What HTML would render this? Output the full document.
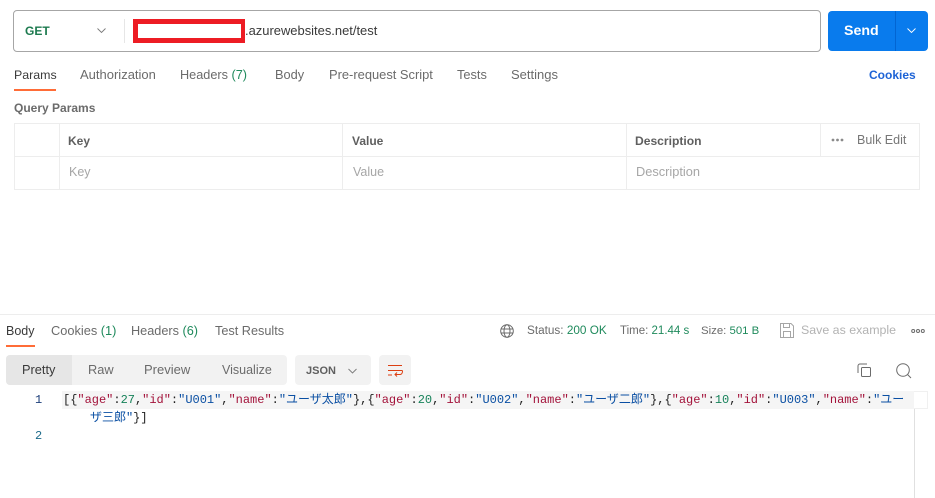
<!DOCTYPE html>
<html><head><meta charset="utf-8">
<style>
html,body{margin:0;padding:0;background:#fff}
body{width:935px;height:498px;position:relative;overflow:hidden;font-family:"Liberation Sans","Noto Sans CJK JP",sans-serif;font-size:12.8px;color:#6b6b6b}
.a{position:absolute}
.t{position:absolute;white-space:nowrap;line-height:16px}
.b{font-weight:bold}
.g{color:#1f8a5c}
.code{position:absolute;white-space:pre;font-family:"Liberation Mono","Noto Sans CJK JP",monospace;font-size:12px;line-height:18px;letter-spacing:-0.01px;color:#212121}
.k{color:#a3123a}.s{color:#0a4fa3}.n{color:#17825a}
svg{position:absolute;overflow:visible}
</style></head><body>

<!-- URL bar -->
<div class="a" style="left:13px;top:10px;width:806px;height:40px;border:1px solid #a6a6a6;border-radius:4px"></div>
<div class="t b" style="left:25px;top:23px;color:#1d7a4f;font-size:12px">GET</div>
<svg style="left:97px;top:27px" width="10" height="8"><path d="M0.5 1.5L4.5 5.5L8.5 1.5" fill="none" stroke="#7a7a7a" stroke-width="0.9"/></svg>
<div class="a" style="left:124px;top:19px;width:1px;height:24px;background:#e6e6e6"></div>
<div class="a" style="left:133px;top:19px;width:103px;height:14px;border:5px solid #ed1c24;border-right-width:4px;background:#fff"></div>
<div class="t" style="left:245px;top:23px;color:#3a3a3a;font-size:12.95px">.azurewebsites.net/test</div>

<!-- Send -->
<div class="a" style="left:828px;top:11px;width:100px;height:40px;background:#097bed;border-radius:4px"></div>
<div class="a" style="left:895px;top:11px;width:1px;height:40px;background:#0265d2"></div>
<div class="t b" style="left:844px;top:23px;color:#fff;font-size:14.2px">Send</div>
<svg style="left:907px;top:27px" width="10" height="8"><path d="M0.5 1.5L4.5 5.5L8.5 1.5" fill="none" stroke="#fff" stroke-width="0.9"/></svg>

<!-- Tabs -->
<div class="t" style="left:14px;top:67px;color:#3a3a3a;font-size:12.4px">Params</div>
<div class="a" style="left:14px;top:89px;width:42px;height:2px;background:#ff6c37"></div>
<div class="t" style="left:80px;top:67px;font-size:13px">Authorization</div>
<div class="t" style="left:180px;top:67px;font-size:12.7px">Headers <span class="g">(7)</span></div>
<div class="t" style="left:275px;top:67px">Body</div>
<div class="t" style="left:329px;top:67px;font-size:12.9px">Pre-request Script</div>
<div class="t" style="left:457px;top:67px">Tests</div>
<div class="t" style="left:511px;top:67px;font-size:13px">Settings</div>
<div class="t b" style="left:869px;top:67px;color:#1d63d6;font-size:12px">Cookies</div>
<div class="t b" style="left:14px;top:100px;font-size:12px">Query Params</div>

<!-- Table -->
<div class="a" style="left:14px;top:123px;width:904px;height:65px;border:1px solid #ededed"></div>
<div class="a" style="left:15px;top:156px;width:904px;height:1px;background:#ededed"></div>
<div class="a" style="left:59px;top:124px;width:1px;height:65px;background:#ededed"></div>
<div class="a" style="left:342px;top:124px;width:1px;height:65px;background:#ededed"></div>
<div class="a" style="left:626px;top:124px;width:1px;height:65px;background:#ededed"></div>
<div class="a" style="left:820px;top:124px;width:1px;height:32px;background:#ededed"></div>
<div class="t b" style="left:68px;top:133px;font-size:12px;color:#5f5f5f">Key</div>
<div class="t b" style="left:352px;top:133px;font-size:12px;color:#5f5f5f">Value</div>
<div class="t b" style="left:635px;top:133px;font-size:12.1px;color:#5f5f5f">Description</div>
<svg style="left:831px;top:137px" width="14" height="6"><circle cx="2" cy="3" r="1.4" fill="#8a8a8a"/><circle cx="6.5" cy="3" r="1.4" fill="#8a8a8a"/><circle cx="11" cy="3" r="1.4" fill="#8a8a8a"/></svg>
<div class="t" style="left:857px;top:132px;color:#777;font-size:12.5px">Bulk Edit</div>
<div class="t" style="left:69px;top:164px;color:#a6a6a6;font-size:12.5px">Key</div>
<div class="t" style="left:353px;top:164px;color:#a6a6a6;font-size:12.5px">Value</div>
<div class="t" style="left:636px;top:164px;color:#a6a6a6">Description</div>

<!-- Response header -->
<div class="a" style="left:0;top:314px;width:935px;height:1px;background:#ededed"></div>
<div class="t" style="left:6px;top:323px;color:#3a3a3a;font-size:12.5px">Body</div>
<div class="a" style="left:6px;top:345px;width:29px;height:2px;background:#ff6c37"></div>
<div class="t" style="left:51px;top:323px">Cookies <span class="g">(1)</span></div>
<div class="t" style="left:131px;top:323px;font-size:12.7px">Headers <span class="g">(6)</span></div>
<div class="t" style="left:215px;top:323px;font-size:12.7px">Test Results</div>

<svg style="left:500px;top:324px" width="14" height="14" fill="none" stroke="#6b6b6b"><circle cx="7" cy="7" r="6.3"/><ellipse cx="7" cy="7" rx="3" ry="6.3"/><path d="M1 5H13M1 9H13"/></svg>
<div class="t" style="left:527px;top:323px;font-size:11.75px">Status: <span class="g">200 OK</span></div>
<div class="t" style="left:620px;top:323px;font-size:11.5px">Time: <span class="g">21.44 s</span></div>
<div class="t" style="left:701px;top:323px;font-size:11.4px">Size: <span class="g">501 B</span></div>
<svg style="left:780px;top:323px" width="14" height="15" fill="none" stroke="#a6a6a6"><path d="M0.5 0.5H11L13.5 3V14.5H0.5Z"/><path d="M3.5 0.5V4.5H9.5V0.5M3.5 14.5V8.5H10.5V14.5"/></svg>
<div class="t" style="left:801px;top:322px;color:#b3b3b3;font-size:12.4px">Save as example</div>
<svg style="left:911px;top:328px" width="15" height="6" fill="none" stroke="#6b6b6b"><circle cx="2.2" cy="3" r="1.5"/><circle cx="7" cy="3" r="1.5"/><circle cx="11.8" cy="3" r="1.5"/></svg>

<!-- Toolbar -->
<div class="a" style="left:6px;top:355px;width:281px;height:30px;background:#f2f2f2;border-radius:4px"></div>
<div class="a" style="left:6px;top:355px;width:66px;height:30px;background:#e6e6e6;border-radius:4px 0 0 4px"></div>
<div class="t" style="left:22px;top:362px;color:#3a3a3a">Pretty</div>
<div class="t" style="left:88px;top:362px">Raw</div>
<div class="t" style="left:144px;top:362px;font-size:13px">Preview</div>
<div class="t" style="left:222px;top:362px;font-size:12.5px">Visualize</div>
<div class="a" style="left:295px;top:355px;width:76px;height:30px;background:#f2f2f2;border-radius:4px"></div>
<div class="t b" style="left:306px;top:363px;font-size:11px;color:#5f5f5f">JSON</div>
<svg style="left:348px;top:368px" width="10" height="7"><path d="M0.5 1L4.5 5L8.5 1" fill="none" stroke="#7a7a7a" stroke-width="0.9"/></svg>
<div class="a" style="left:379px;top:355px;width:32px;height:30px;background:#f2f2f2;border-radius:4px"></div>
<svg style="left:388px;top:365px" width="15" height="12" fill="none" stroke="#dc3f12"><path d="M0 0.5H14M0 5.5H14C15 5.5 14.5 9.5 12 9.5H7M9 7.5L7 9.5L9 11.5M0 10H4"/></svg>

<svg style="left:857px;top:363px" width="15" height="15" fill="none" stroke="#6b6b6b"><path d="M10 1H3A2 2 0 0 0 1 3V10"/><rect x="4.5" y="4.5" width="9" height="9" rx="1"/></svg>
<svg style="left:896px;top:363px" width="16" height="16" fill="none" stroke="#6b6b6b"><circle cx="7" cy="7" r="6.3"/><path d="M11.5 11.5L15 15"/></svg>

<!-- Code -->
<div class="a" style="left:62px;top:391px;width:864px;height:16px;border:1px solid #f0f0f0;background:#fff"></div>
<div class="a" style="left:62px;top:391px;width:852px;height:18px;background:#f5f5f5"></div>
<div class="a" style="left:914px;top:409px;width:1px;height:89px;background:#e0e0e0"></div>
<div class="code" style="left:35px;top:391px;color:#1d3f7a">1</div>
<div class="code" style="left:35px;top:427px;color:#1c6a8a">2</div>
<div class="code" style="left:63px;top:391px">[{<span class="k">"age"</span>:<span class="n">27</span>,<span class="k">"id"</span>:<span class="s">"U001"</span>,<span class="k">"name"</span>:<span class="s">"ユーザ太郎"</span>},{<span class="k">"age"</span>:<span class="n">20</span>,<span class="k">"id"</span>:<span class="s">"U002"</span>,<span class="k">"name"</span>:<span class="s">"ユーザ二郎"</span>},{<span class="k">"age"</span>:<span class="n">10</span>,<span class="k">"id"</span>:<span class="s">"U003"</span>,<span class="k">"name"</span>:<span class="s">"ユー</span></div>
<div class="code" style="left:90px;top:409px"><span class="s">ザ三郎"</span>}]</div>

</body></html>
